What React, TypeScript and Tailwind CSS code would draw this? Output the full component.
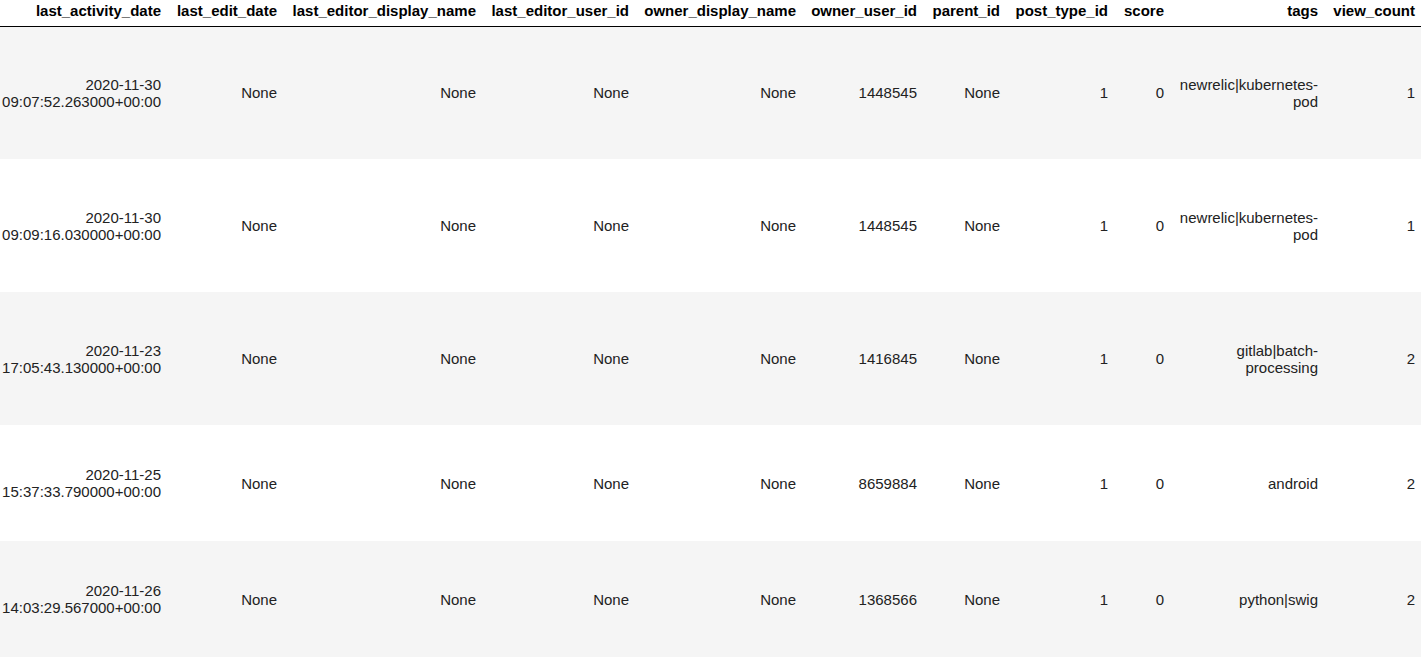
const COLS = [
  { key: 'last_activity_date', w: 177 },
  { key: 'last_edit_date', w: 116 },
  { key: 'last_editor_display_name', w: 199 },
  { key: 'last_editor_user_id', w: 153 },
  { key: 'owner_display_name', w: 167 },
  { key: 'owner_user_id', w: 121 },
  { key: 'parent_id', w: 83 },
  { key: 'post_type_id', w: 108 },
  { key: 'score', w: 56 },
  { key: 'tags', w: 154 },
  { key: 'view_count', w: 97 },
];

const ROWS = [
  { h: 'h-[133px]', date: '2020-11-30 09:07:52.263000+00:00', owner: '1448545', tags: 'newrelic|kubernetes-pod', views: '1' },
  { h: 'h-[133px]', date: '2020-11-30 09:09:16.030000+00:00', owner: '1448545', tags: 'newrelic|kubernetes-pod', views: '1' },
  { h: 'h-[133px]', date: '2020-11-23 17:05:43.130000+00:00', owner: '1416845', tags: 'gitlab|batch-processing', views: '2' },
  { h: 'h-[116px]', date: '2020-11-25 15:37:33.790000+00:00', owner: '8659884', tags: 'android', views: '2' },
  { h: 'h-[116px]', date: '2020-11-26 14:03:29.567000+00:00', owner: '1368566', tags: 'python|swig', views: '2' },
];

export default function App() {
  return (
    <div className="w-[1424px] h-[667px] overflow-hidden bg-white text-[15px] font-['Liberation_Sans',Arial,sans-serif]">
      <table className="table-fixed ml-[-10px] w-[1431px]">
        <colgroup>
          {COLS.map((c) => <col key={c.key} style={{ width: c.w }} />)}
        </colgroup>
        <thead className="border-b border-black align-bottom text-black">
          <tr className="h-[26px]">
            {COLS.map((c) => (
              <th key={c.key} className="px-[6px] pt-[1px] pb-[6px] text-right font-bold whitespace-nowrap leading-[18px]">{c.key}</th>
            ))}
          </tr>
        </thead>
        <tbody className="text-[#222]">
          {ROWS.map((r, i) => (
            <tr key={i} className={`${r.h} ${i % 2 === 0 ? 'bg-[#f5f5f5]' : 'bg-white'}`}>
              {[r.date, 'None', 'None', 'None', 'None', r.owner, 'None', '1', '0', r.tags, r.views].map((v, j) => (
                <td key={j} className="px-[6px] text-right align-middle leading-[17px]">{v}</td>
              ))}
            </tr>
          ))}
        </tbody>
      </table>
    </div>
  );
}
